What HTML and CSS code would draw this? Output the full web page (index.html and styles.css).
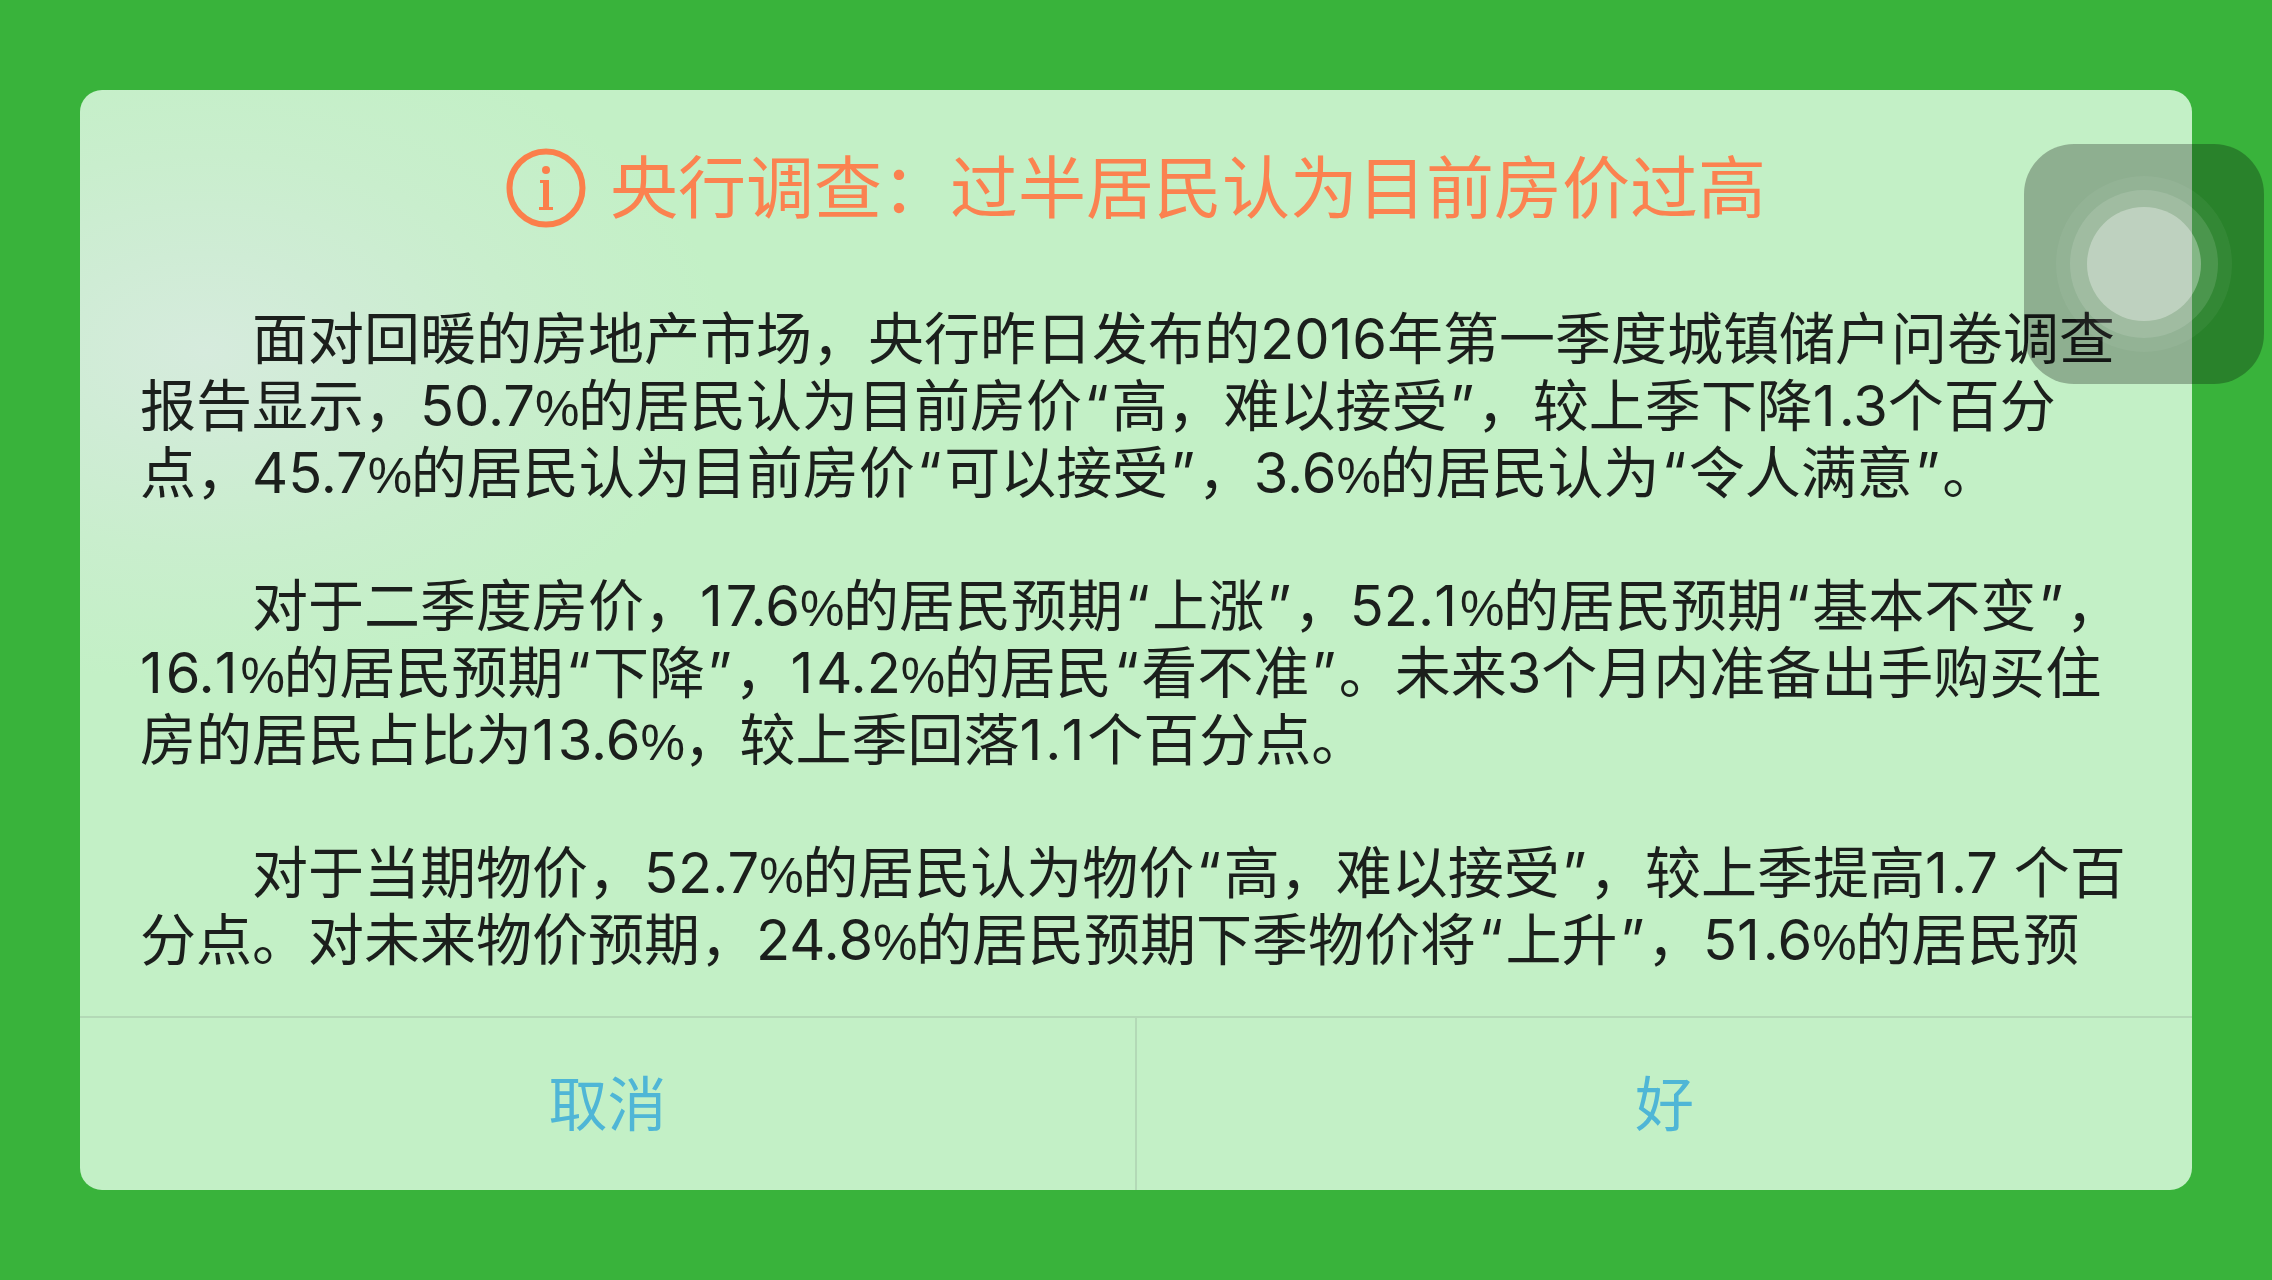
FILE: index.html
```html
<!DOCTYPE html>
<html lang="zh-CN">
<head>
<meta charset="utf-8">
<title>央行调查</title>
<link rel="stylesheet" href="styles.css">
</head>
<body>
<main class="dialog">
  <header class="title-row">
    <svg class="info-icon" viewBox="0 0 80 80" aria-hidden="true">
      <circle class="info-ring" cx="40" cy="40" r="36.5"/>
      <circle class="info-mark" cx="40" cy="22" r="4"/>
      <path class="info-mark" d="M34 32h9v27h4v3H33v-3h4V35h-3z"/>
    </svg>
    <h1 class="title">央行调查：过半居民认为目前房价过高</h1>
  </header>
  <section class="content">
    <p class="para">面对回暖的房地产市场，央行昨日发布的2016年第一季度城镇储户问卷调查<br>报告显示，50.7<span class="pct">%</span>的居民认为目前房价<span class="q">“</span>高，难以接受<span class="q">”</span>，较上季下降<span class="one">1</span>.3个百分<br>点，45.7<span class="pct">%</span>的居民认为目前房价<span class="q">“</span>可以接受<span class="q">”</span>，3.6<span class="pct">%</span>的居民认为<span class="q">“</span>令人满意<span class="q">”</span>。</p>
    <p class="para">对于二季度房价，<span class="one">1</span>7.6<span class="pct">%</span>的居民预期<span class="q">“</span>上涨<span class="q">”</span>，52.<span class="one">1</span><span class="pct">%</span>的居民预期<span class="q">“</span>基本不变<span class="q">”</span>，<br><span class="one">1</span>6.<span class="one">1</span><span class="pct">%</span>的居民预期<span class="q">“</span>下降<span class="q">”</span>，<span class="one">1</span>4.2<span class="pct">%</span>的居民<span class="q">“</span>看不准<span class="q">”</span>。未来3个月内准备出手购买住<br>房的居民占比为<span class="one">1</span>3.6<span class="pct">%</span>，较上季回落<span class="one">1</span>.<span class="one">1</span>个百分点。</p>
    <p class="para">对于当期物价，52.7<span class="pct">%</span>的居民认为物价<span class="q">“</span>高，难以接受<span class="q">”</span>，较上季提高<span class="one">1</span>.7 个百<br>分点。对未来物价预期，24.8<span class="pct">%</span>的居民预期下季物价将<span class="q">“</span>上升<span class="q">”</span>，5<span class="one">1</span>.6<span class="pct">%</span>的居民预</p>
  </section>
  <footer class="actions">
    <div class="action">取消</div>
    <div class="action action-right">好</div>
  </footer>
</main>
<div class="assistive">
  <div class="ring-outer"><div class="ring-mid"><div class="ring-core"></div></div></div>
</div>
</body>
</html>
```
FILE: styles.css
```css
* { box-sizing: border-box; }
html, body { margin: 0; height: 100%; }
body {
  width: 2272px;
  height: 1280px;
  overflow: hidden;
  padding: 90px 80px;
  background: #39b33b;
  font-family: Inter, "Noto Sans CJK SC", sans-serif;
}
.dialog {
  width: 2112px;
  height: 1100px;
  display: flex;
  flex-direction: column;
  border-radius: 22px;
  overflow: hidden;
  background:
    radial-gradient(ellipse 520px 330px at 125px 262px, #d6ebdd 0%, #cfecd5 30%, #c9eecd 60%, rgba(195,240,198,0) 100%),
    #c3f0c6;
}
.title-row {
  height: 214px;
  padding-bottom: 18px;
  padding-left: 426px;
  display: flex;
  align-items: center;
  gap: 24px;
  flex: none;
}
.info-icon { width: 80px; height: 80px; flex: none; }
.info-ring { fill: none; stroke: #fb7f4b; stroke-width: 6; }
.info-mark { fill: #fb7f4b; }
.title {
  margin: 0;
  font-size: 68px;
  font-weight: 400;
  line-height: 80px;
  color: #fb8250;
  white-space: nowrap;
}
.content {
  flex: 1;
  overflow: hidden;
  padding-left: 60px;
  padding-top: 2px;
  font-size: 56px;
  line-height: 66.8px;
  color: #1b1f1c;
  white-space: nowrap;
}
.para {
  margin: 0 0 66.8px;
  text-indent: 112px;
}
.pct {
  font-family: "Liberation Sans", sans-serif;
  font-size: 50px;
  line-height: 0;
  letter-spacing: -1.5px;
}
.one { letter-spacing: 3px; }
.q { margin: 0 2.4px; }
.actions {
  flex: none;
  height: 174px;
  display: flex;
  border-top: 2px solid #b3d9b6;
}
.action {
  flex: 1;
  display: flex;
  align-items: center;
  justify-content: center;
  padding-bottom: 8px;
  font-size: 59px;
  color: #4fb6d6;
}
.action-right { border-left: 2px solid #b3d9b6; }
.assistive {
  position: absolute;
  left: 2024px;
  top: 144px;
  width: 240px;
  height: 240px;
  border-radius: 50px;
  background: rgba(0, 0, 0, 0.27);
  display: flex;
  align-items: center;
  justify-content: center;
}
.ring-outer, .ring-mid, .ring-core {
  display: flex;
  align-items: center;
  justify-content: center;
  border-radius: 50%;
}
.ring-outer { width: 176px; height: 176px; background: rgba(255,255,255,0.05); }
.ring-mid { width: 148px; height: 148px; background: rgba(255,255,255,0.12); }
.ring-core { width: 114px; height: 114px; background: rgba(255,255,255,0.32); }
```
